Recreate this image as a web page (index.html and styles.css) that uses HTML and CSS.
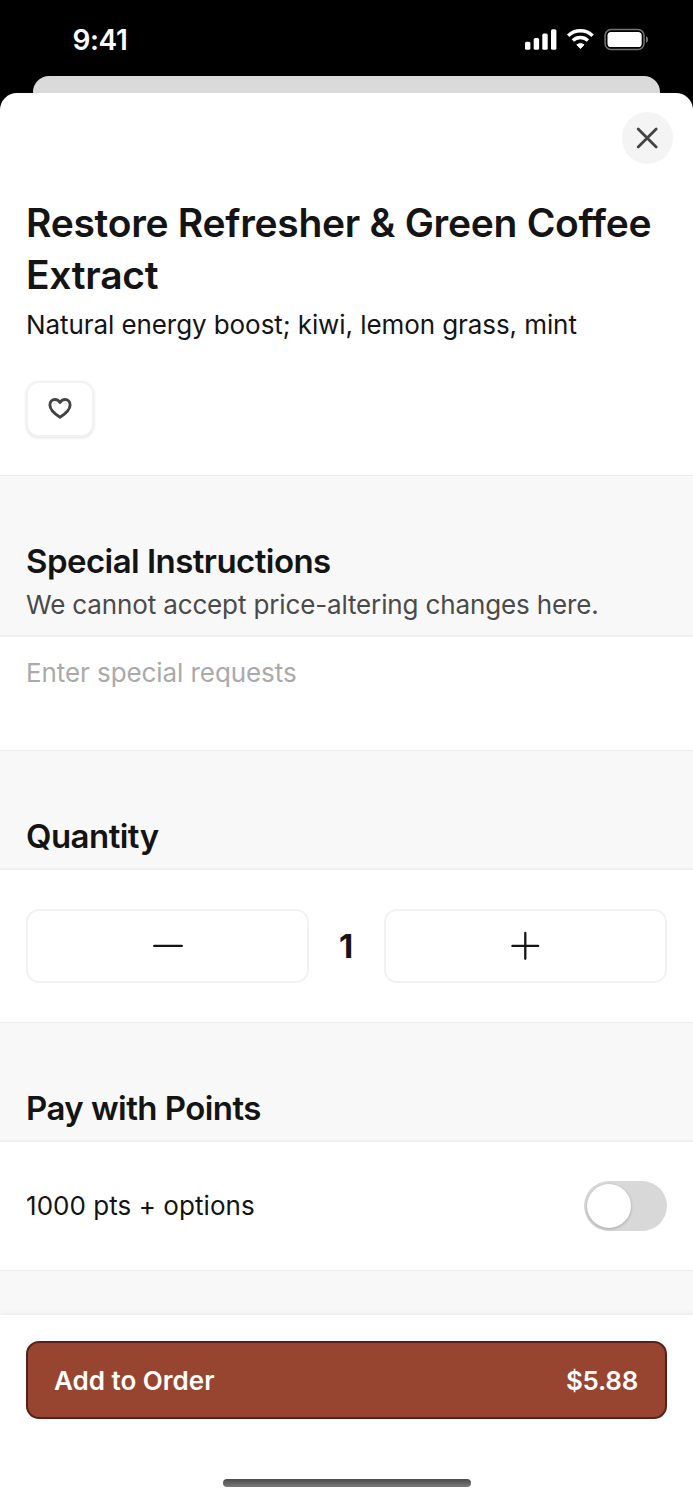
FILE: index.html
```html
<!DOCTYPE html>
<html lang="en">
<head>
<meta charset="utf-8">
<title>Restore Refresher &amp; Green Coffee Extract</title>
<link rel="stylesheet" href="styles.css">
</head>
<body>
<div class="screen">
  <header class="status">
    <span class="time">9:41</span>
    <svg class="status-icons" width="126" height="24" viewBox="0 0 126 24" fill="none">
      <g fill="#fff">
        <rect x="0" y="13.8" width="5.4" height="8" rx="1.6"/>
        <rect x="8.7" y="10" width="5.4" height="11.8" rx="1.6"/>
        <rect x="17.3" y="5.6" width="5.4" height="16.2" rx="1.6"/>
        <rect x="26" y="1.2" width="5.4" height="20.6" rx="1.6"/>
        <path d="M55.4 20.6L51.8 16.7Q55.4 14.2 59 16.7Z" stroke="#fff" stroke-width="1" stroke-linejoin="round"/>
      </g>
      <path d="M43.2 7.7C50.2 1.1 60.6 1.1 67.6 7.7" stroke="#fff" stroke-width="3.5"/>
      <path d="M47.8 12.4C52.2 8.5 58.6 8.5 63 12.4" stroke="#fff" stroke-width="3.3"/>
      <rect x="80.1" y="1.5" width="38.9" height="20" rx="6" stroke="#747474" stroke-width="1.5"/>
      <rect x="82.5" y="4" width="34.2" height="15" rx="3.6" fill="#fff"/>
      <path d="M121 8.2V14.8C123.8 13.6 123.8 9.4 121 8.2Z" fill="#747474"/>
    </svg>
  </header>
  <div class="back-card"></div>
  <main class="sheet">
    <section class="product">
      <button class="close" aria-label="Close">
        <svg width="24" height="24" viewBox="0 0 24 24"><path d="M3.2 3L21.2 21M21.2 3L3.2 21" stroke="#444" stroke-width="2.8" stroke-linecap="round"/></svg>
      </button>
      <h1 class="title">Restore Refresher &amp; Green Coffee Extract</h1>
      <p class="text subtitle">Natural energy boost; kiwi, lemon grass, mint</p>
      <button class="favorite" aria-label="Favorite">
        <svg width="26" height="24" viewBox="0 0 26 24"><path d="M13 20.2C9 17.6 2.9 12.8 2.9 7.9C2.9 4.8 5.1 2.5 7.9 2.5C10.2 2.5 12 3.8 13 5.6C14 3.8 15.8 2.5 18.1 2.5C20.9 2.5 23.1 4.8 23.1 7.9C23.1 12.8 17 17.6 13 20.2Z" fill="none" stroke="#444" stroke-width="2.9" stroke-linejoin="round"/></svg>
      </button>
    </section>
    <div class="band band-instructions">
      <h2 class="heading">Special Instructions</h2>
      <p class="text muted">We cannot accept price-altering changes here.</p>
    </div>
    <section class="request"><p class="text placeholder">Enter special requests</p></section>
    <div class="band band-quantity"><h2 class="heading">Quantity</h2></div>
    <section class="quantity">
      <button class="step" aria-label="Decrease"><svg width="30" height="30" viewBox="0 0 30 30"><path d="M1.2 14.9H28.8" stroke="#141414" stroke-width="2.3" stroke-linecap="round"/></svg></button>
      <span class="count">1</span>
      <button class="step" aria-label="Increase"><svg width="30" height="30" viewBox="0 0 30 30"><path d="M1.4 14.9H27.2M14.3 2V27.8" stroke="#141414" stroke-width="2.3" stroke-linecap="round"/></svg></button>
    </section>
    <div class="band band-points"><h2 class="heading">Pay with Points</h2></div>
    <section class="points">
      <p class="text points-text">1000 pts + options</p>
      <span class="toggle"><span class="knob"></span></span>
    </section>
    <div class="band band-end"></div>
    <footer class="footer">
      <button class="order"><span>Add to Order</span><span class="price">$5.88</span></button>
      <div class="home-bar"></div>
    </footer>
  </main>
</div>
</body>
</html>
```
FILE: styles.css
```css
* { box-sizing: border-box; }
body { margin: 0; background: #000; font-family: Inter, "Liberation Sans", sans-serif; color: #141414; }
h1, h2, p { margin: 0; }
button { padding: 0; font: inherit; color: inherit; background: #fff; border: 0; }
svg { display: block; flex: none; }
.screen { width: 693px; height: 1500px; overflow: hidden; display: flex; flex-direction: column; background: #000; }
.status { height: 76px; flex: none; display: flex; justify-content: space-between; align-items: flex-start; padding: 28px 42px 0 72.5px; color: #fff; }
.time { font-size: 28px; font-weight: 600; line-height: 24px; letter-spacing: -0.4px; }
.back-card { height: 17px; flex: none; margin: 0 33px; background: #dadada; border-radius: 16px 16px 0 0; }
.sheet { flex: 1; display: flex; flex-direction: column; background: #fff; border-radius: 17px 17px 0 0; overflow: hidden; }
.product { height: 382px; display: flex; flex-direction: column; align-items: flex-start; padding: 19px 20px 0 26px; }
.close { width: 51.5px; height: 51.5px; border-radius: 50%; background: #f4f4f4; align-self: flex-end; display: grid; place-items: center; }
.title { margin-top: 33.5px; font-size: 39px; line-height: 52px; font-weight: 600; letter-spacing: -0.28px; }
.text { font-size: 26px; line-height: 36px; font-weight: 400; letter-spacing: -0.08px; white-space: nowrap; }
.subtitle { margin-top: 6px; }
.favorite { width: 68px; height: 56px; margin-top: 38px; border: 2px solid #f2f2f2; border-radius: 13px; box-shadow: 0 1px 3px rgba(0,0,0,.12); display: grid; place-items: center; }
.band { background: #f8f8f8; border-top: 1.5px solid #ededed; border-bottom: 2px solid #f0f0f0; padding: 0 26px; display: flex; flex-direction: column; justify-content: flex-end; }
.band-instructions { height: 162px; padding-bottom: 12px; }
.heading { font-size: 33px; line-height: 44px; font-weight: 600; letter-spacing: -0.55px; white-space: nowrap; }
.band-instructions .text { margin-top: 4px; }
.muted { color: #4a4a4a; letter-spacing: -0.14px; }
.request { height: 113px; padding: 18px 26px; }
.placeholder { color: #aaa; }
.band-quantity { height: 120px; padding-bottom: 10px; }
.quantity { height: 152px; padding: 39px 26px; display: grid; grid-template-columns: 283px 1fr 283px; align-items: center; }
.step { height: 74px; border: 2px solid #f2f2f2; border-radius: 13px; display: grid; place-items: center; }
.count { text-align: center; font-size: 33px; line-height: 44px; font-weight: 700; margin: -1px 1px 0 0; }
.band-points { height: 120px; padding-bottom: 10px; }
.points { height: 128px; padding: 0 26px; display: flex; align-items: center; justify-content: space-between; }
.points-text { letter-spacing: 0.05px; }
.toggle { width: 83px; height: 50px; padding: 3px; border-radius: 25px; background: #d8d8d8; }
.knob { display: block; width: 44px; height: 44px; border-radius: 50%; background: #fff; box-shadow: 0 1px 3px rgba(0,0,0,.25); }
.band-end { height: 45px; border-bottom: 0; }
.footer { height: 185px; padding: 26px 26px 0; background: #fff; box-shadow: 0 0 6px rgba(0,0,0,.1); display: flex; flex-direction: column; align-items: center; }
.order { width: 641px; height: 78px; padding: 0 27px 0 26px; border: 2px solid #54221a; border-radius: 13px; background: #974530; color: #fff; font-size: 26px; font-weight: 600; display: flex; align-items: center; justify-content: space-between; }
.price { letter-spacing: -0.3px; }
.home-bar { width: 248px; height: 8px; margin-top: 60px; border-radius: 4px; background: linear-gradient(#4b4b4b, #7a7a7a); }
```
